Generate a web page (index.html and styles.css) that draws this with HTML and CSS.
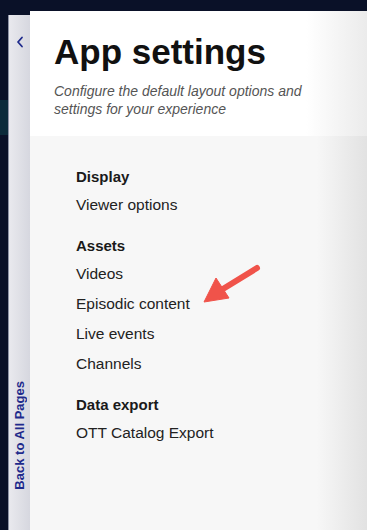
FILE: index.html
```html
<!DOCTYPE html>
<html lang="en">
<head>
    <meta charset="UTF-8">
    <meta name="viewport" content="width=device-width, initial-scale=1.0">
    <title>App settings</title>
    <link rel="stylesheet" href="styles.css">
</head>
<body>

<div class="app">
    <div class="nav-rail">
        <div class="nav-active"></div>
    </div>

    <div class="back-strip">
        <svg class="back-chevron" width="8" height="12" viewBox="0 0 8 12">
            <path d="M6 1.5 L2 6 L6 10.5" fill="none" stroke="#1e2a8c" stroke-width="1.8" stroke-linecap="round" stroke-linejoin="round"/>
        </svg>
        <span class="back-label">Back to All Pages</span>
    </div>

    <div class="panel">
        <div class="panel-header">
            <h1>App settings</h1>
            <p class="subtitle">Configure the default layout options and settings for your experience</p>
        </div>

        <div class="panel-body">
            <div class="group">
                <h2>Display</h2>
                <a class="item">Viewer options</a>
            </div>

            <div class="group">
                <h2>Assets</h2>
                <a class="item">Videos</a>
                <a class="item">Episodic content</a>
                <a class="item">Live events</a>
                <a class="item">Channels</a>
            </div>

            <div class="group">
                <h2>Data export</h2>
                <a class="item">OTT Catalog Export</a>
            </div>

            <svg class="callout" width="70" height="56" viewBox="0 0 70 56">
                <line x1="59" y1="12" x2="20" y2="36" stroke="#f0534a" stroke-width="6" stroke-linecap="round"/>
                <polygon points="6,46 18,22 31,42" fill="#f0534a" stroke="#f0534a" stroke-width="1" stroke-linejoin="round"/>
            </svg>
        </div>
    </div>
</div>

</body>
</html>
```

FILE: styles.css
```css
body {
    margin: 0;
    background-color: #ffffff;
    font-family: "Liberation Sans", Arial, sans-serif;
    color: #222;
}

.app {
    display: flex;
    width: 367px;
    height: 530px;
    padding-top: 11px;
    box-sizing: border-box;
    background-color: #0a1128;
}

.nav-rail {
    width: 8px;
    flex-shrink: 0;
}

.nav-active {
    margin-top: 89px;
    height: 35px;
    background-color: #0c2b3b;
}

.back-strip {
    width: 22px;
    flex-shrink: 0;
    margin-top: 4px;
    border-left: 1px solid #8e93a6;
    background: linear-gradient(to right, #e9e9ee, #d6d7df);
    display: flex;
    flex-direction: column;
    align-items: center;
    justify-content: space-between;
    padding: 21px 0 40px;
    box-sizing: border-box;
}

.back-chevron {
    display: block;
}

.back-label {
    writing-mode: vertical-rl;
    transform: rotate(180deg);
    font-size: 13px;
    font-weight: bold;
    color: #1e2a8c;
    white-space: nowrap;
}

.panel {
    flex: 1;
    display: flex;
    flex-direction: column;
    background: linear-gradient(to right, #f7f7f7 85%, #e2e2e2 100%);
}

.panel-header {
    height: 125px;
    box-sizing: border-box;
    padding: 20px 20px 0 24px;
    background: linear-gradient(to right, #ffffff 82%, #ebebeb 100%);
}

h1 {
    margin: 0;
    font-size: 35px;
    font-weight: bold;
    line-height: 42px;
    color: #111;
}

.subtitle {
    max-width: 256px;
    margin: 9px 0 0;
    font-size: 14px;
    font-style: italic;
    line-height: 18px;
    color: #555;
}

.panel-body {
    position: relative;
    padding: 30px 0 0 46px;
}

.group {
    display: flex;
    flex-direction: column;
    margin-bottom: 15px;
}

h2 {
    margin: 0 0 2px;
    font-size: 15px;
    font-weight: bold;
    line-height: 22px;
    color: #1a1a1a;
}

.item {
    font-size: 15.5px;
    line-height: 30px;
    color: #222;
}

.callout {
    position: absolute;
    left: 168px;
    top: 120px;
}
```
